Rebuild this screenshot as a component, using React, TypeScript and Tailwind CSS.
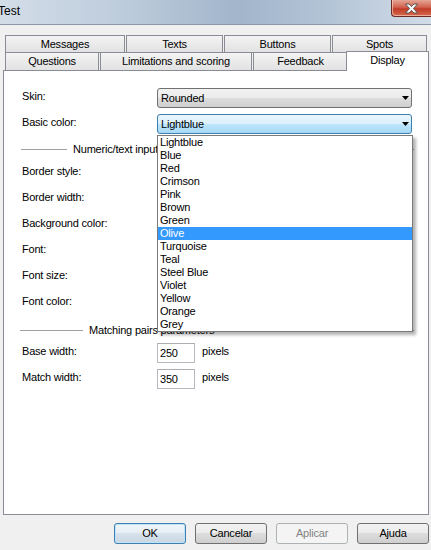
import React from 'react';

const colors = [
    'Lightblue', 'Blue', 'Red', 'Crimson', 'Pink', 'Brown', 'Green', 'Olive',
    'Turquoise', 'Teal', 'Steel Blue', 'Violet', 'Yellow', 'Orange', 'Grey',
];

const numericLabels = ['Border style:', 'Border width:', 'Background color:', 'Font:', 'Font size:', 'Font color:'];

function Arrow() {
    return (
        <svg width="7" height="4" viewBox="0 0 7 4" className="shrink-0">
            <path d="M0 0 H7 L3.5 4 Z" fill="#000" />
        </svg>
    );
}

function Separator({ lead, text }: { lead: string; text: string }) {
    return (
        <div className="flex items-center h-[13px] mr-[14px]">
            <div className={`${lead} h-px bg-[#a0a0a0]`} />
            <span className="px-[6px] whitespace-nowrap">{text}</span>
            <div className="flex-1 h-px bg-[#a0a0a0]" />
        </div>
    );
}

function WinButton({ label, kind }: { label: string; kind?: 'default' | 'disabled' }) {
    let cls =
        'border-[#707070] bg-[linear-gradient(to_bottom,#f2f2f2_0%,#ebebeb_50%,#dddddd_50%,#cfcfcf_100%)] text-black';
    if (kind === 'default') {
        cls =
            'border-[#3c7fb1] bg-[linear-gradient(to_bottom,#f0f5f9_0%,#e6eef5_50%,#d6e2ec_50%,#c9d7e3_100%)] shadow-[inset_0_0_0_1px_#bfe3f8] text-black';
    }
    if (kind === 'disabled') {
        cls = 'border-[#adb2b5] bg-[#f4f4f4] text-[#838383]';
    }
    return (
        <div className={`w-[72px] h-[21px] rounded-[3px] border flex items-center justify-center ${cls}`}>
            {label}
        </div>
    );
}

export default function App() {
    return (
        <div className="w-[431px] h-[550px] overflow-hidden bg-[#f0f0f0] font-['Liberation_Sans',Arial,sans-serif] text-[11px] leading-[13px] tracking-[-0.2px] text-black">
            {/* title bar */}
            <div className="h-[25px] flex items-start border-b border-[#8a98a8] bg-[linear-gradient(to_right,#d3dde8_0%,#bccbdb_30%,#a2b5cb_55%,#b2c3d6_75%,#d2dce7_100%)] overflow-hidden">
                <span className="ml-[-2px] pt-[4px] text-[12px] leading-[14px] tracking-normal">Test</span>
                <div className="ml-auto w-[40px] h-[17px] rounded-bl-[4px] border-l border-b border-[#6b2a22] bg-[linear-gradient(to_bottom,#e6a594_0%,#d0624f_45%,#c13c29_55%,#d66a4c_100%)] shadow-[inset_1px_-1px_0_rgba(255,220,210,0.6)] flex items-center justify-center">
                    <svg width="15" height="11" viewBox="0 0 15 11">
                        <path
                            d="M1.5 1 H5 L7.5 3.6 L10 1 H13.5 L9.4 5.5 L13.5 10 H10 L7.5 7.4 L5 10 H1.5 L5.6 5.5 Z"
                            fill="#ffffff"
                            stroke="#4a4a4a"
                            strokeWidth="0.9"
                        />
                    </svg>
                </div>
            </div>

            {/* tabs */}
            <div className="mt-[10px]">
                <div className="flex gap-[1px] pl-[5px] h-[18px]">
                    <div className="w-[120px] h-[18px] border border-[#898c95] bg-[linear-gradient(to_bottom,#f3f3f3,#e2e2e2)] flex items-center justify-center">Messages</div>
                    <div className="w-[97px] h-[18px] border border-[#898c95] bg-[linear-gradient(to_bottom,#f3f3f3,#e2e2e2)] flex items-center justify-center">Texts</div>
                    <div className="w-[107px] h-[18px] border border-[#898c95] bg-[linear-gradient(to_bottom,#f3f3f3,#e2e2e2)] flex items-center justify-center">Buttons</div>
                    <div className="w-[95px] h-[18px] border border-[#898c95] bg-[linear-gradient(to_bottom,#f3f3f3,#e2e2e2)] flex items-center justify-center">Spots</div>
                </div>
                <div className="flex items-end gap-[1px] pl-[5px] h-[18px] -mt-px">
                    <div className="w-[94px] h-[18px] border border-b-0 border-[#898c95] bg-[linear-gradient(to_bottom,#f3f3f3,#e2e2e2)] flex items-center justify-center">Questions</div>
                    <div className="w-[152px] h-[18px] border border-b-0 border-[#898c95] bg-[linear-gradient(to_bottom,#f3f3f3,#e2e2e2)] flex items-center justify-center">Limitations and scoring</div>
                    <div className="w-[95px] h-[18px] border border-b-0 border-[#898c95] bg-[linear-gradient(to_bottom,#f3f3f3,#e2e2e2)] flex items-center justify-center">Feedback</div>
                    <div className="relative z-10 w-[83px] h-[20px] -ml-[3px] -mb-px border border-b-0 border-[#898c95] bg-white flex items-start justify-center pt-[2px]">Display</div>
                </div>
            </div>

            {/* panel */}
            <div className="relative ml-[3px] w-[426px] h-[445px] border border-[#898c95] bg-white pt-[17px] pl-[18px]">
                <div className="flex items-center h-[20px]">
                    <span className="w-[135px] pb-[4px]">Skin:</span>
                    <div className="w-[255px] h-[20px] rounded-[3px] border border-[#707070] bg-[linear-gradient(to_bottom,#f2f2f2_0%,#ebebeb_50%,#dddddd_50%,#cfcfcf_100%)] flex items-center justify-between pl-[3px] pr-[2px]">
                        <span>Rounded</span>
                        <Arrow />
                    </div>
                </div>
                <div className="flex items-center h-[20px] mt-[6px]">
                    <span className="w-[135px] pb-[4px]">Basic color:</span>
                    <div className="w-[255px] h-[20px] rounded-[3px] border border-[#3c7fb1] bg-[linear-gradient(to_bottom,#eaf6fd_0%,#d9f0fc_50%,#bee6fd_50%,#a7d9f5_100%)] flex items-center justify-between pl-[3px] pr-[2px]">
                        <span>Lightblue</span>
                        <Arrow />
                    </div>
                </div>

                <div className="mt-[9px] -ml-[1px]">
                    <Separator lead="w-[46px]" text="Numeric/text input parameters" />
                </div>
                <div className="mt-[2px]">
                    {numericLabels.map((l) => (
                        <div key={l} className="h-[26px] flex items-center">
                            {l}
                        </div>
                    ))}
                </div>

                <div className="mt-[10px] -ml-[2px]">
                    <Separator lead="w-[63px]" text="Matching pairs parameters" />
                </div>
                <div className="flex items-center h-[20px] mt-[6px]">
                    <span className="w-[135px] pb-[4px]">Base width:</span>
                    <div className="w-[38px] h-[20px] border border-[#b5b9bf] border-t-[#abadb3] flex items-center pl-[2px]">250</div>
                    <span className="ml-[7px] pb-[4px]">pixels</span>
                </div>
                <div className="flex items-center h-[20px] mt-[6px]">
                    <span className="w-[135px] pb-[4px]">Match width:</span>
                    <div className="w-[38px] h-[20px] border border-[#b5b9bf] border-t-[#abadb3] flex items-center pl-[2px]">350</div>
                    <span className="ml-[7px] pb-[4px]">pixels</span>
                </div>

                {/* open dropdown list */}
                <div className="absolute left-[153px] top-[64px] w-[256px] border border-[#7a7a7a] bg-white shadow-[3px_3px_3px_rgba(0,0,0,0.3)] z-20">
                    {colors.map((c) => (
                        <div
                            key={c}
                            className={
                                c === 'Olive'
                                    ? 'h-[13px] flex items-center pl-[2px] bg-[#3399ff] text-white'
                                    : 'h-[13px] flex items-center pl-[2px]'
                            }
                        >
                            {c}
                        </div>
                    ))}
                </div>
            </div>

            {/* dialog buttons */}
            <div className="flex justify-end gap-[9px] pr-[2px] mt-[8px]">
                <WinButton label="OK" kind="default" />
                <WinButton label="Cancelar" />
                <WinButton label="Aplicar" kind="disabled" />
                <WinButton label="Ajuda" />
            </div>
        </div>
    );
}
